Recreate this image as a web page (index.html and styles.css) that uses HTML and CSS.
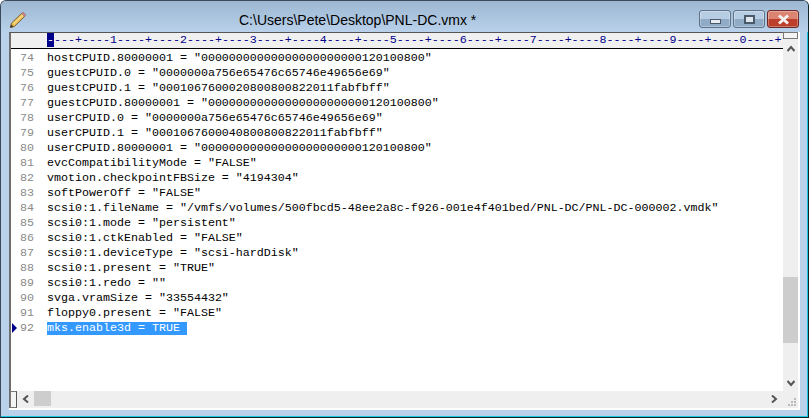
FILE: index.html
```html
<!DOCTYPE html>
<html lang="en">
<head>
<meta charset="utf-8">
<title>C:\Users\Pete\Desktop\PNL-DC.vmx *</title>
<link rel="stylesheet" href="styles.css">
</head>
<body>
<div class="window">
  <div class="titlebar">
    <svg class="app-icon" width="18" height="18" viewBox="0 0 18 18">
      <path d="M1.5 16.5 L2.5 12 L13 2 L16 5 L5.5 15.5 Z" fill="#e3b34a" stroke="#7a6a45" stroke-width="1"/>
      <path d="M3.5 12.5 L13.5 3 L15 4.5 L5 14 Z" fill="#f4d27a"/>
      <path d="M12.5 2.5 L14 1 L17 4 L15.5 5.5 Z" fill="#d0808a" stroke="#7a6a6a" stroke-width="0.5"/>
      <path d="M1 17 L2 13.5 L4.5 15.5 Z" fill="#4a3a20"/>
    </svg>
    <div class="title">C:\Users\Pete\Desktop\PNL-DC.vmx *</div>
    <div class="controls">
      <div class="ctl"><span class="min-glyph"></span></div>
      <div class="ctl"><span class="max-glyph"></span></div>
      <div class="ctl close"><svg width="13" height="11" viewBox="0 0 13 11"><path d="M2 1.5 L11 9.5 M11 1.5 L2 9.5" stroke="#f2f2f2" stroke-width="3"/></svg></div>
    </div>
  </div>
  <div class="client">
    <div class="main">
      <div class="ruler">
        <div class="ruler-gutter"></div>
        <div class="ruler-text"><span class="caret">-</span>---+----1----+----2----+----3----+----4----+----5----+----6----+----7----+----8----+----9----+----0----+</div>
      </div>
      <div class="editor">
        <div class="line"><span class="num">74</span><span class="code">hostCPUID.80000001 = "00000000000000000000000120100800"</span></div>
        <div class="line"><span class="num">75</span><span class="code">guestCPUID.0 = "0000000a756e65476c65746e49656e69"</span></div>
        <div class="line"><span class="num">76</span><span class="code">guestCPUID.1 = "0001067600020800800822011fabfbff"</span></div>
        <div class="line"><span class="num">77</span><span class="code">guestCPUID.80000001 = "00000000000000000000000120100800"</span></div>
        <div class="line"><span class="num">78</span><span class="code">userCPUID.0 = "0000000a756e65476c65746e49656e69"</span></div>
        <div class="line"><span class="num">79</span><span class="code">userCPUID.1 = "0001067600040800800822011fabfbff"</span></div>
        <div class="line"><span class="num">80</span><span class="code">userCPUID.80000001 = "00000000000000000000000120100800"</span></div>
        <div class="line"><span class="num">81</span><span class="code">evcCompatibilityMode = "FALSE"</span></div>
        <div class="line"><span class="num">82</span><span class="code">vmotion.checkpointFBSize = "4194304"</span></div>
        <div class="line"><span class="num">83</span><span class="code">softPowerOff = "FALSE"</span></div>
        <div class="line"><span class="num">84</span><span class="code">scsi0:1.fileName = "/vmfs/volumes/500fbcd5-48ee2a8c-f926-001e4f401bed/PNL-DC/PNL-DC-000002.vmdk"</span></div>
        <div class="line"><span class="num">85</span><span class="code">scsi0:1.mode = "persistent"</span></div>
        <div class="line"><span class="num">86</span><span class="code">scsi0:1.ctkEnabled = "FALSE"</span></div>
        <div class="line"><span class="num">87</span><span class="code">scsi0:1.deviceType = "scsi-hardDisk"</span></div>
        <div class="line"><span class="num">88</span><span class="code">scsi0:1.present = "TRUE"</span></div>
        <div class="line"><span class="num">89</span><span class="code">scsi0:1.redo = ""</span></div>
        <div class="line"><span class="num">90</span><span class="code">svga.vramSize = "33554432"</span></div>
        <div class="line"><span class="num">91</span><span class="code">floppy0.present = "FALSE"</span></div>
        <div class="line current"><span class="marker"></span><span class="num">92</span><span class="code selected">mks.enable3d = TRUE </span></div>
      </div>
      <div class="hscroll">
        <div class="split"></div>
        <svg class="arrow" width="7" height="8" viewBox="0 0 7 8"><path d="M6 0.5 L2 4 L6 7.5" fill="none" stroke="#555" stroke-width="2"/></svg>
        <div class="hthumb"></div>
        <div class="htrack"></div>
        <svg class="arrow" width="7" height="8" viewBox="0 0 7 8"><path d="M1 0.5 L5 4 L1 7.5" fill="none" stroke="#555" stroke-width="2"/></svg>
      </div>
    </div>
    <div class="vscroll">
      <div class="vsplit"></div>
      <svg class="varrow-up" width="8" height="7" viewBox="0 0 8 7"><path d="M0.5 6 L4 2 L7.5 6" fill="none" stroke="#555" stroke-width="2"/></svg>
      <div class="vtrack-top"></div>
      <div class="vthumb"></div>
      <div class="vtrack-bottom"></div>
      <svg class="varrow-down" width="8" height="7" viewBox="0 0 8 7"><path d="M0.5 1 L4 5 L7.5 1" fill="none" stroke="#555" stroke-width="2"/></svg>
      <svg class="grip" width="10" height="10" viewBox="0 0 10 10"><path d="M7 0h2v2h-2zM4 3h2v2h-2zM7 3h2v2h-2zM1 6h2v2h-2zM4 6h2v2h-2zM7 6h2v2h-2z" fill="#bbb"/></svg>
    </div>
  </div>
</div>
</body>
</html>
```
FILE: styles.css
```css
* { box-sizing: border-box; }
html, body { margin: 0; padding: 0; }
body { width: 809px; height: 418px; overflow: hidden; background: #fff; }
.window {
  width: 809px; height: 418px;
  display: flex; flex-direction: column;
  background: #b9d1ea;
  border: 1px solid #3a4a58;
  border-right-color: #10222a;
  border-bottom-color: #10222a;
  border-radius: 6px 6px 0 0;
  box-shadow: inset -1px -1px 0 #19c5e0;
  padding: 0 8px 7px 8px;
}
.titlebar {
  height: 31px; flex: none;
  margin: 0 -8px; padding: 0 8px;
  display: flex; align-items: center; position: relative;
  background: linear-gradient(#9db7d2, #b9d1ea);
  border-radius: 5px 5px 0 0;
}
.app-icon { position: absolute; left: 8px; top: 10px; }
.title {
  width: 100%; padding: 7px 0 0 230px;
  font: 14px "Liberation Sans", sans-serif; color: #000;
  white-space: pre;
}
.controls { position: absolute; right: 9px; top: 9px; display: flex; gap: 2px; }
.ctl {
  width: 32px; height: 18px;
  border: 1px solid #5f7288; border-radius: 3px;
  background: linear-gradient(#b7cde3 0 50%, #8fabc6 50% 100%);
  box-shadow: inset 0 0 0 1px rgba(255, 255, 255, 0.3);
  display: flex; align-items: center; justify-content: center;
}
.close { background: linear-gradient(#dc8472 0 50%, #bb3f2b 50% 100%); border-color: #6a2a2a; }
.min-glyph { width: 11px; height: 5px; margin-top: 4px; background: #e8edf2; border: 1px solid #4a5a6a; }
.max-glyph { width: 11px; height: 9px; background: #dfe6ee; border: 2px solid #4a5a6a; }
.client { flex: 1; display: flex; min-height: 0; background: #fff; padding: 0 2px 2px 0; }
.main { flex: 1; min-width: 0; display: flex; flex-direction: column; border-left: 2px solid #6d6d6d; border-top: 1px solid #555; }
.ruler {
  height: 16px; flex: none; display: flex;
  background: #f0f0f0; border-bottom: 1px solid #000;
  font: 11.67px/15px "Liberation Mono", monospace; color: #00008b;
  overflow: hidden;
}
.ruler-gutter { width: 36px; flex: none; }
.ruler-text { white-space: pre; }
.caret { background: #00008b; color: #fff; }
.editor { flex: 1; min-height: 0; background: #fff; padding-top: 2px; font: 11.67px/15px "Liberation Mono", monospace; color: #000; overflow: hidden; }
.line { height: 15px; display: flex; position: relative; white-space: pre; }
.num { width: 36px; flex: none; color: #8a8a8a; padding-left: 9px; }
.marker { position: absolute; left: 1px; top: 2px; width: 0; height: 0; border-left: 5px solid #00008b; border-top: 5px solid transparent; border-bottom: 5px solid transparent; }
.selected { background: #3399ff; color: #fff; line-height: 13px; height: 13px; margin-top: 1px; }
.hscroll { height: 17px; flex: none; display: flex; align-items: center; background: #efefef; }
.split { width: 7px; height: 17px; margin-left: -1px; border: 1px solid #777; border-right-color: #555; background: #f4f4f4; }
.arrow { margin: -2px 5px 0; flex: none; }
.hthumb { width: 17px; height: 15px; margin-top: -2px; background: #cdcdcd; }
.htrack { flex: 1; }
.vscroll { width: 15px; flex: none; display: flex; flex-direction: column; align-items: center; background: #efefef; position: relative; padding-bottom: 17px; }
.vsplit { width: 100%; height: 7px; flex: none; border: 1px solid #777; background: #f4f4f4; }
.varrow-up { flex: none; margin-top: 6px; }
.varrow-down { flex: none; margin-bottom: 4px; }
.vtrack-top { height: 225px; flex: none; width: 100%; }
.vthumb { flex: none; width: 100%; height: 66px; background: #cdcdcd; }
.vtrack-bottom { flex: 1; width: 100%; }
.grip { position: absolute; right: 1px; bottom: 0; }
```
